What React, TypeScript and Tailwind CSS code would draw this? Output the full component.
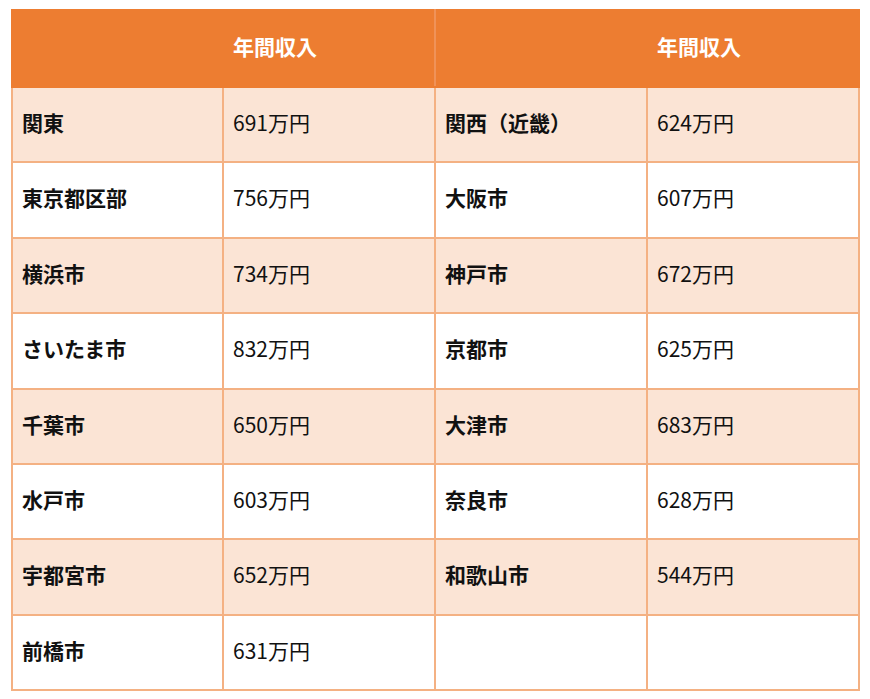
const rows: [string, string, string, string][] = [
  ['関東', '691万円', '関西（近畿）', '624万円'],
  ['東京都区部', '756万円', '大阪市', '607万円'],
  ['横浜市', '734万円', '神戸市', '672万円'],
  ['さいたま市', '832万円', '京都市', '625万円'],
  ['千葉市', '650万円', '大津市', '683万円'],
  ['水戸市', '603万円', '奈良市', '628万円'],
  ['宇都宮市', '652万円', '和歌山市', '544万円'],
  ['前橋市', '631万円', '', ''],
];

const font = { fontFamily: '"Noto Sans CJK JP", "Noto Sans", sans-serif' };

export default function App() {
  return (
    <div className="min-h-screen bg-white pl-[11px] pt-[9px]" style={font}>
      <table className="w-[849px] table-fixed border-collapse text-[21px] text-[#111]">
        <colgroup>
          <col className="w-[211px]" />
          <col className="w-[212px]" />
          <col className="w-[212px]" />
          <col className="w-[212px]" />
        </colgroup>
        <thead>
          <tr className="h-[77px] bg-[#ed7d31] text-white">
            <th className="border-2 border-[#ed7d31]" />
            <th className="border-2 border-[#ed7d31] border-r-[#f09258] px-[9px] pb-[4px] text-left font-bold">年間収入</th>
            <th className="border-2 border-[#ed7d31] border-l-[#f09258]" />
            <th className="border-2 border-[#ed7d31] px-[9px] pb-[4px] text-left font-bold">年間収入</th>
          </tr>
        </thead>
        <tbody>
          {rows.map((r, i) => (
            <tr key={i} className={`h-[75.4px] ${i % 2 === 0 ? 'bg-[#fbe4d5]' : 'bg-white'}`}>
              <td className="border-2 border-[#f4b183] px-[9px] pb-[4px] font-bold">{r[0]}</td>
              <td className="border-2 border-[#f4b183] px-[9px] pb-[4px]">{r[1]}</td>
              <td className="border-2 border-[#f4b183] px-[9px] pb-[4px] font-bold">{r[2]}</td>
              <td className="border-2 border-[#f4b183] px-[9px] pb-[4px]">{r[3]}</td>
            </tr>
          ))}
        </tbody>
      </table>
    </div>
  );
}
